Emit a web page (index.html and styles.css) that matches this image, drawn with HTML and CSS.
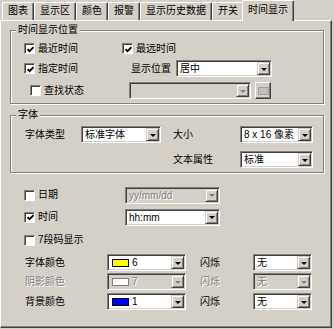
FILE: index.html
```html
<!DOCTYPE html>
<html lang="zh-CN">
<head>
    <meta charset="UTF-8">
    <title>时间显示</title>
    <link rel="stylesheet" href="styles.css">
</head>
<body>
    <div class="tabs">
        <div class="tab">图表</div>
        <div class="tab">显示区</div>
        <div class="tab">颜色</div>
        <div class="tab">报警</div>
        <div class="tab">显示历史数据</div>
        <div class="tab">开关</div>
        <div class="tab active">时间显示</div>
    </div>

    <div class="panel">
        <fieldset class="group pos-group">
            <legend>时间显示位置</legend>
            <div class="row">
                <label class="check col-a"><span class="box"><svg viewBox="0 0 7 7"><path d="M0.5 3.2l2 2l4-4"/></svg></span>最近时间</label>
                <label class="check"><span class="box"><svg viewBox="0 0 7 7"><path d="M0.5 3.2l2 2l4-4"/></svg></span>最远时间</label>
            </div>
            <div class="row">
                <label class="check col-b"><span class="box"><svg viewBox="0 0 7 7"><path d="M0.5 3.2l2 2l4-4"/></svg></span>指定时间</label>
                <span class="lbl lbl-pos">显示位置</span>
                <div class="combo w-pos"><span class="val">居中</span><span class="drop"></span></div>
            </div>
            <div class="row row-find">
                <label class="check col-c"><span class="box"></span>查找状态</label>
                <div class="combo w-find off"><span class="val"></span><span class="drop"></span></div>
                <span class="pick"><span class="pick-icon"></span></span>
            </div>
        </fieldset>

        <fieldset class="group font-group">
            <legend>字体</legend>
            <div class="font-grid">
                <span class="lbl">字体类型</span>
                <div class="combo"><span class="val">标准字体</span><span class="drop"></span></div>
                <span></span>
                <span class="lbl">大小</span>
                <div class="combo"><span class="val">8 x 16 像素</span><span class="drop"></span></div>
                <span class="lbl attr">文本属性</span>
                <div class="combo"><span class="val">标准</span><span class="drop"></span></div>
            </div>
        </fieldset>

        <div class="opts">
            <div class="opt-row">
                <label class="check col-d"><span class="box"></span>日期</label>
                <div class="combo w-fmt off"><span class="val">yy/mm/dd</span><span class="drop"></span></div>
            </div>
            <div class="opt-row gap6">
                <label class="check col-d"><span class="box"><svg viewBox="0 0 7 7"><path d="M0.5 3.2l2 2l4-4"/></svg></span>时间</label>
                <div class="combo w-fmt"><span class="val">hh:mm</span><span class="drop"></span></div>
            </div>
            <div class="opt-row gap7">
                <label class="check"><span class="box"></span>7段码显示</label>
            </div>
        </div>

        <div class="colors">
            <div class="color-row">
                <span class="lbl col-e">字体颜色</span>
                <div class="combo w-color"><span class="val"><i class="swatch yellow"></i>6</span><span class="drop"></span></div>
                <span class="lbl col-f">闪烁</span>
                <div class="combo w-blink"><span class="val">无</span><span class="drop"></span></div>
            </div>
            <div class="color-row gap2 dim">
                <span class="lbl col-e">阴影颜色</span>
                <div class="combo w-color off"><span class="val"><i class="swatch white"></i>7</span><span class="drop"></span></div>
                <span class="lbl col-f">闪烁</span>
                <div class="combo w-blink off"><span class="val">无</span><span class="drop"></span></div>
            </div>
            <div class="color-row gap3">
                <span class="lbl col-e">背景颜色</span>
                <div class="combo w-color"><span class="val"><i class="swatch blue"></i>1</span><span class="drop"></span></div>
                <span class="lbl col-f">闪烁</span>
                <div class="combo w-blink"><span class="val">无</span><span class="drop"></span></div>
            </div>
        </div>
    </div>
</body>
</html>
```

FILE: styles.css
```css
body {
    margin: 0;
    background-color: #d4d0c8;
    font-family: "Liberation Sans", "Noto Sans CJK SC", sans-serif;
    font-size: 10px;
    color: #000;
}

/* tabs */
.tabs {
    display: flex;
    align-items: flex-end;
    height: 20px;
    padding-left: 2px;
}
.tab {
    position: relative;
    height: 18px;
    box-sizing: border-box;
    padding: 0 5px;
    line-height: 16px;
    border-top: 1px solid #fff;
    border-left: 1px solid #fff;
    border-right: 1px solid #404040;
    border-radius: 2px 2px 0 0;
    box-shadow: inset -1px 0 #808080;
    white-space: nowrap;
}
.tab.active {
    z-index: 1;
    height: 21px;
    margin: 0 -2px -1px;
    line-height: 18px;
    background-color: #d4d0c8;
}

/* page frame */
.panel {
    width: 332px;
    height: 308px;
    box-sizing: border-box;
    border: 1px solid;
    border-color: #fff #404040 #404040 #fff;
    box-shadow: inset -1px -1px #808080;
}

/* group boxes */
.group {
    width: 314px;
    box-sizing: border-box;
    margin: 0 0 0 9px;
    padding: 4px 0 4px;
    min-inline-size: 0;
    border: 1px solid #808080;
    box-shadow: inset 1px 1px #fff, 1px 1px #fff;
}
.group legend {
    margin-left: 5px;
    padding: 0 2px;
    line-height: 12px;
    background-color: #d4d0c8;
}
.pos-group {
    margin-top: 3px;
}
.font-group {
    margin-top: 5px;
    padding-top: 5px;
}

.row {
    display: flex;
    align-items: center;
    height: 17px;
    padding-left: 13px;
}
.row + .row {
    margin-top: 3px;
}
.row.row-find {
    margin-top: 5px;
    padding-left: 19px;
}

.lbl {
    white-space: nowrap;
    line-height: 12px;
}
.dim .lbl,
.off .val {
    color: #808080;
    text-shadow: 1px 1px #fff;
}

/* checkbox */
.check {
    display: flex;
    align-items: center;
    white-space: nowrap;
    line-height: 12px;
}
.box {
    display: flex;
    align-items: center;
    justify-content: center;
    width: 11px;
    height: 11px;
    box-sizing: border-box;
    margin-right: 3px;
    border: 1px solid;
    border-color: #808080 #fff #fff #808080;
    box-shadow: inset 1px 1px #404040;
    background-color: #fff;
}
.box svg {
    width: 7px;
    height: 7px;
    margin: 1px 0 0 1px;
    fill: none;
    stroke: #000;
    stroke-width: 1.8;
}
.col-a { width: 98px; }
.col-b { width: 107px; }
.col-c { width: 99px; }
.col-d { width: 101px; }

.lbl-pos { width: 45px; }

/* combo box */
.combo {
    display: flex;
    align-items: center;
    height: 17px;
    box-sizing: border-box;
    padding: 1px;
    border: 1px solid;
    border-color: #808080 #fff #fff #808080;
    box-shadow: inset 1px 1px #404040, inset -1px -1px #d4d0c8;
    background-color: #fff;
}
.combo.off {
    background-color: #d4d0c8;
}
.combo .val {
    display: flex;
    align-items: center;
    flex: 1;
    padding-left: 2px;
    line-height: 13px;
    white-space: nowrap;
    overflow: hidden;
}
.drop {
    display: flex;
    align-items: center;
    justify-content: center;
    width: 13px;
    height: 13px;
    box-sizing: border-box;
    border: 1px solid;
    border-color: #d4d0c8 #404040 #404040 #d4d0c8;
    box-shadow: inset 1px 1px #fff, inset -1px -1px #808080;
    background-color: #d4d0c8;
}
.drop::after {
    content: "";
    margin-top: 1px;
    border-top: 3px solid #000;
    border-left: 3px solid transparent;
    border-right: 3px solid transparent;
}
.off .drop::after {
    border-top-color: #808080;
}

.w-pos { width: 96px; }
.w-find { width: 122px; }
.w-fmt { width: 95px; }
.w-color { width: 79px; }
.w-blink { width: 59px; }

.pick {
    display: flex;
    align-items: center;
    justify-content: center;
    width: 16px;
    height: 17px;
    box-sizing: border-box;
    margin-left: 4px;
    border: 1px solid;
    border-color: #fff #404040 #404040 #fff;
    box-shadow: inset -1px -1px #808080;
}
.pick-icon {
    width: 9px;
    height: 6px;
    border: 1px solid #a0a0a0;
    background-color: #c0c0c0;
}

/* font group */
.font-grid {
    display: grid;
    grid-template-columns: 56px 80px 12px 67px 73px;
    grid-auto-rows: 17px;
    row-gap: 8px;
    align-items: center;
    padding-left: 14px;
}
.font-grid .attr {
    grid-column: 4;
}

/* date / time options */
.opts {
    margin-top: 14px;
    padding-left: 23px;
}
.opt-row {
    display: flex;
    align-items: center;
    height: 16px;
}
.gap6 { margin-top: 6px; }
.gap7 { margin-top: 7px; }
.gap2 { margin-top: 2px; }
.gap3 { margin-top: 3px; }

/* colour rows */
.colors {
    margin-top: 6px;
    padding-left: 24px;
}
.color-row {
    display: flex;
    align-items: center;
    height: 17px;
}
.col-e { width: 82px; }
.col-f {
    width: 53px;
    margin-left: 14px;
}
.swatch {
    width: 17px;
    height: 8px;
    box-sizing: border-box;
    margin: 0 3px 0 1px;
    border: 1px solid #000;
}
.swatch.yellow { background-color: #ffff00; }
.swatch.white { background-color: #fff; border-color: #808080; }
.swatch.blue { background-color: #0000ff; }
```
